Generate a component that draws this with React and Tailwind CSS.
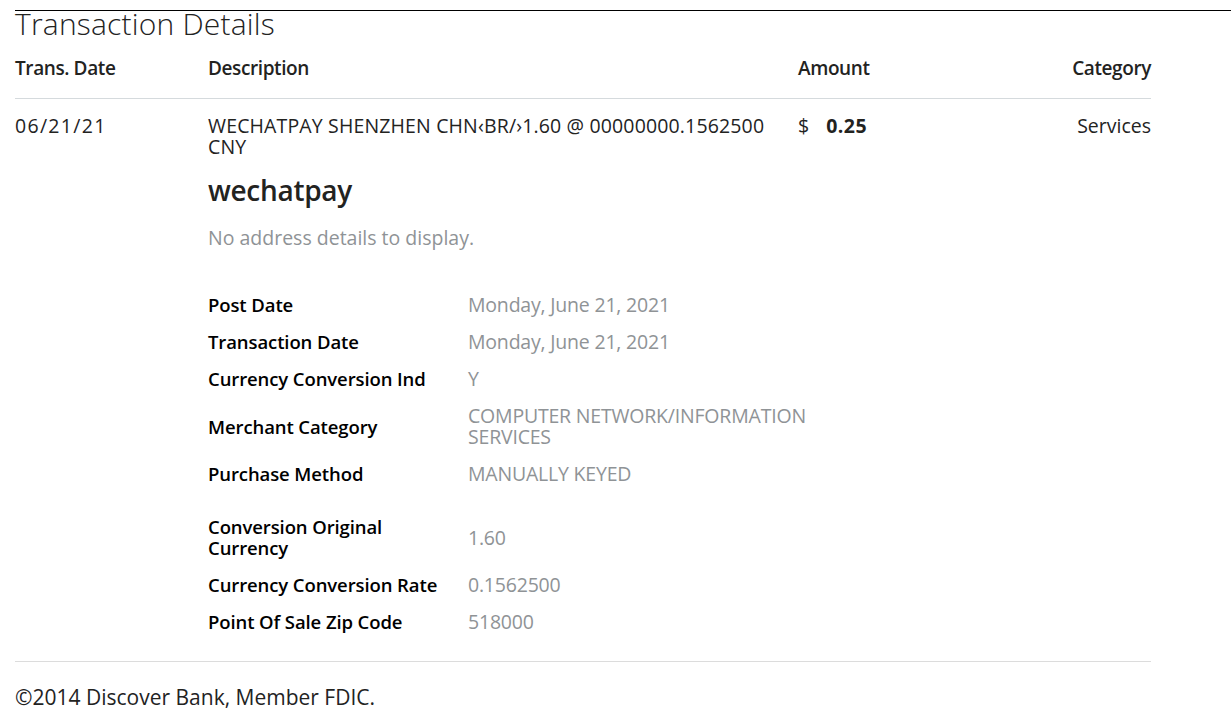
import React from 'react';

const details = [
    { label: 'Post Date', value: 'Monday, June 21, 2021' },
    { label: 'Transaction Date', value: 'Monday, June 21, 2021' },
    { label: 'Currency Conversion Ind', value: 'Y' },
    { label: 'Merchant Category', value: 'COMPUTER NETWORK/INFORMATION SERVICES' },
    { label: 'Purchase Method', value: 'MANUALLY KEYED' },
    { label: 'Conversion Original Currency', value: '1.60', gap: true },
    { label: 'Currency Conversion Rate', value: '0.1562500' },
    { label: 'Point Of Sale Zip Code', value: '518000' },
];

const App = () => {
    return (
        <div className="w-[1231px] min-h-[722px] bg-white pl-[15px] pt-[10px] text-[#23231f] font-['Open_Sans',sans-serif]">
            {/* Title bar */}
            <div className="border-t border-black">
                <h1 className="text-[30px] font-light leading-[26px] tracking-[0.2px]">Transaction Details</h1>
            </div>

            <div className="w-[1136px]">
                {/* Table header */}
                <div className="grid grid-cols-[193px_590px_1fr_1fr] pt-[21px] pb-[19px] border-b border-[#d5dadd] text-[19px] font-semibold leading-[21px] tracking-[-0.4px]">
                    <div>Trans. Date</div>
                    <div>Description</div>
                    <div>Amount</div>
                    <div className="text-right">Category</div>
                </div>

                {/* Transaction row */}
                <div className="grid grid-cols-[193px_590px_1fr_1fr] pt-[16px] pb-[21px] border-b border-[#dcdcdc] text-[19.5px] leading-[21px]">
                    <div className="tracking-[1.3px]">06/21/21</div>
                    <div>
                        <div className="pr-[20px] tracking-[0.15px]">WECHATPAY SHENZHEN CHN‹BR/›1.60 @ 00000000.1562500 CNY</div>
                        <h2 className="mt-[17px] text-[28px] font-semibold leading-[32px] tracking-[-0.3px]">wechatpay</h2>
                        <p className="mt-[21px] text-[#8f9396]">No address details to display.</p>

                        <div className="mt-[38px]">
                            {details.map((d) => (
                                <div key={d.label} className={`flex items-center py-[8px] ${d.gap ? 'mt-[16px]' : ''}`}>
                                    <div className="w-[260px] shrink-0 pr-[20px] text-[18.5px] font-semibold text-black tracking-[-0.1px]">{d.label}</div>
                                    <div className="w-[345px] shrink-0 text-[#8f9396] tracking-[-0.2px]">{d.value}</div>
                                </div>
                            ))}
                        </div>
                    </div>
                    <div className="flex gap-[17px]">
                        <span>$</span>
                        <span className="font-bold tracking-[0.5px]">0.25</span>
                    </div>
                    <div className="text-right">Services</div>
                </div>

                {/* Footer */}
                <div className="pt-[25px] text-[21px] leading-[21px]">©2014 Discover Bank, Member FDIC.</div>
            </div>
        </div>
    );
};

export default App;
